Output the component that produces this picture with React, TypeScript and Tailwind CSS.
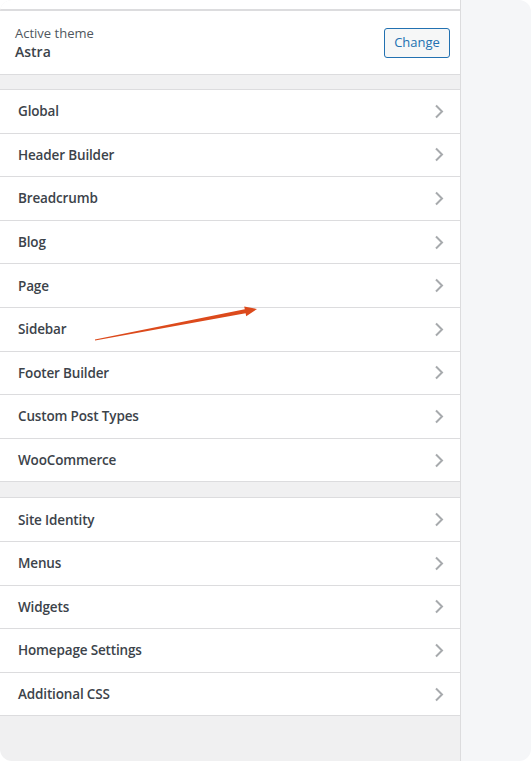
const mainSections = [
  "Global",
  "Header Builder",
  "Breadcrumb",
  "Blog",
  "Page",
  "Sidebar",
  "Footer Builder",
  "Custom Post Types",
  "WooCommerce",
];

const siteSections = [
  "Site Identity",
  "Menus",
  "Widgets",
  "Homepage Settings",
  "Additional CSS",
];

const Chevron = () => (
  <svg width="10" height="15" viewBox="0 0 10 15" fill="none">
    <path d="M2 1.5 L8 7.5 L2 13.5" stroke="#a7aaad" strokeWidth="2" />
  </svg>
);

const Row = ({ title }: { title: string }) => (
  <div className="flex h-[43.6px] items-center justify-between border-b border-[#dcdcde] bg-white pl-[18px] pr-[16px]">
    <span className="text-[13.5px] font-semibold tracking-[-0.15px] text-[#3c434a]">{title}</span>
    <Chevron />
  </div>
);

const App = () => {
  return (
    <div className="bg-white" style={{ fontFamily: '"Open Sans", "Noto Sans", sans-serif' }}>
      <div className="relative flex h-[761px] w-[531px] overflow-hidden rounded-[12px]">
        <div className="flex w-[461px] flex-col border-r border-[#dcdcde] bg-[#f0f0f1]">
          <div className="h-[11px] border-b-2 border-[#dcdcde] bg-white" />
          <div className="flex h-[64px] items-center justify-between border-b border-[#dcdcde] bg-white pl-[15px] pr-[10px]">
            <div className="flex flex-col">
              <span className="text-[13px] leading-[18px] text-[#50575e]">Active theme</span>
              <span className="text-[14px] font-semibold leading-[19px] text-[#3c434a]">Astra</span>
            </div>
            <button className="h-[30px] w-[66px] rounded-[3px] border border-[#2271b1] bg-[#f6f7f7] text-[13px] text-[#2271b1]">
              Change
            </button>
          </div>
          <div className="h-[14px]" />
          <div className="border-t border-[#dcdcde]">
            {mainSections.map((s) => (
              <Row key={s} title={s} />
            ))}
          </div>
          <div className="h-[15px]" />
          <div className="border-t border-[#dcdcde]">
            {siteSections.map((s) => (
              <Row key={s} title={s} />
            ))}
          </div>
        </div>
        <div className="flex-1 bg-[#f5f6f8]" />

        {/* red annotation arrow */}
        <svg className="pointer-events-none absolute left-0 top-0" width="531" height="761">
          <polygon
            points="94.9,339.5 244.8,309.3 244.2,306.4 257,309 246.2,316.2 245.6,313.3 95.1,340.5"
            fill="#dc4a1c"
          />
        </svg>
      </div>
    </div>
  );
};

export default App;
